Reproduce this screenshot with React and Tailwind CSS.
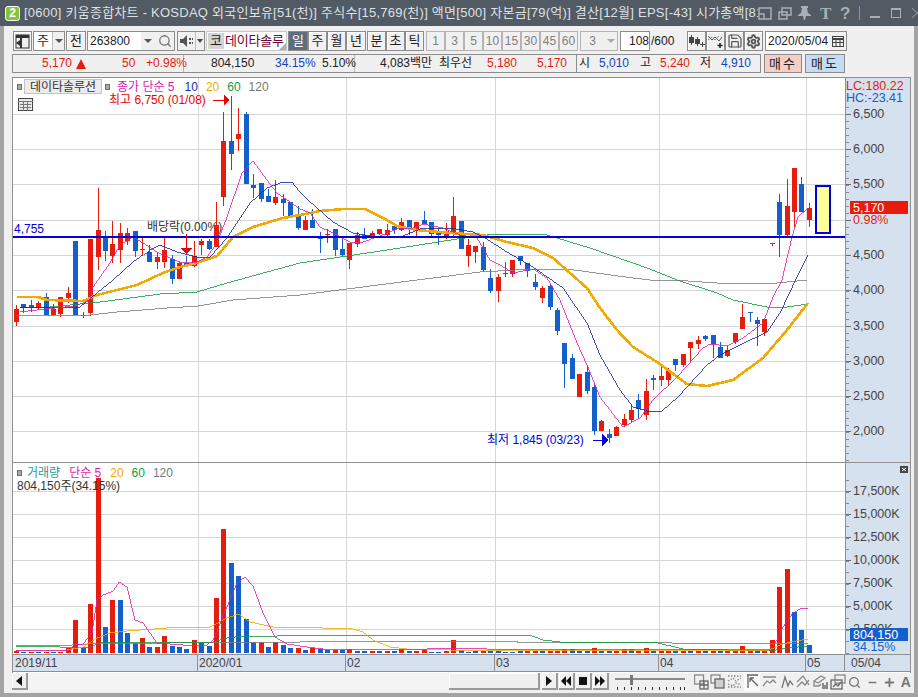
import React from 'react';
import { Search, Settings, Save, Minus, Plus } from 'lucide-react';

const RED = '#e81c0c';
const BLUE = '#1360cc';

// candle data in page pixels: [bodyTop, bodyBottom, high, low, 'r' | 'b']
const candles = [
  [309, 322, 305, 326, 'r'], [304, 308, 304, 313, 'b'], [305, 307, 300, 312, 'b'], [303, 308, 301, 310, 'r'],
  [297, 315, 293, 315, 'b'], [309, 315, 304, 315, 'r'], [297, 314, 297, 317, 'r'], [293, 298, 287, 303, 'r'],
  [241, 315, 241, 315, 'b'], [315, 316, 312, 318, 'r'], [239, 313, 239, 316, 'r'], [230, 257, 188, 270, 'r'],
  [237, 251, 231, 261, 'b'], [244, 256, 221, 263, 'r'], [233, 250, 223, 263, 'r'], [233, 241, 228, 245, 'r'],
  [231, 251, 231, 257, 'b'], [249, 250, 236, 255, 'r'], [252, 262, 245, 262, 'b'], [257, 262, 252, 269, 'r'],
  [250, 262, 238, 268, 'r'], [259, 279, 255, 284, 'b'], [263, 279, 261, 279, 'r'], [263, 266, 256, 267, 'b'],
  [256, 266, 241, 267, 'r'], [241, 245, 239, 255, 'r'], [241, 249, 239, 250, 'b'], [225, 247, 202, 247, 'r'],
  [141, 197, 112, 206, 'r'], [141, 154, 96, 170, 'b'], [134, 139, 108, 151, 'r'], [114, 184, 112, 184, 'b'],
  [185, 188, 174, 198, 'b'], [183, 199, 183, 202, 'b'], [196, 202, 189, 202, 'b'], [197, 203, 180, 205, 'r'],
  [199, 203, 194, 216, 'b'], [202, 216, 202, 218, 'b'], [216, 228, 206, 230, 'b'], [220, 230, 216, 230, 'r'],
  [220, 228, 209, 228, 'b'], [238, 239, 232, 253, 'b'], [234, 235, 229, 243, 'r'], [229, 250, 229, 256, 'b'],
  [249, 255, 238, 257, 'b'], [243, 260, 243, 269, 'r'], [235, 244, 232, 247, 'r'], [235, 239, 228, 239, 'b'],
  [233, 236, 231, 238, 'r'], [229, 234, 229, 235, 'r'], [230, 235, 224, 236, 'r'], [226, 230, 225, 234, 'b'],
  [222, 230, 218, 231, 'r'], [220, 229, 220, 235, 'b'], [222, 229, 222, 236, 'r'], [220, 224, 211, 224, 'b'],
  [222, 234, 222, 236, 'b'], [233, 235, 228, 245, 'b'], [231, 236, 223, 239, 'r'], [216, 232, 197, 236, 'r'],
  [221, 249, 221, 249, 'b'], [245, 256, 239, 267, 'r'], [246, 252, 246, 263, 'r'], [247, 270, 242, 272, 'b'],
  [278, 291, 269, 293, 'b'], [277, 291, 274, 302, 'r'], [273, 274, 262, 277, 'r'], [260, 274, 260, 277, 'r'],
  [256, 261, 256, 265, 'b'], [263, 271, 263, 277, 'b'], [282, 287, 274, 290, 'b'], [288, 298, 286, 303, 'r'],
  [286, 307, 284, 310, 'b'], [310, 331, 308, 335, 'b'], [343, 364, 343, 388, 'b'], [358, 379, 354, 379, 'b'],
  [374, 397, 374, 397, 'r'], [372, 391, 366, 394, 'b'], [387, 431, 383, 435, 'b'], [421, 431, 420, 431, 'r'],
  [434, 438, 429, 443, 'b'], [427, 436, 426, 436, 'r'], [419, 425, 414, 427, 'r'], [410, 420, 405, 423, 'r'],
  [400, 409, 394, 418, 'b'], [391, 415, 379, 420, 'r'], [378, 380, 375, 390, 'b'], [376, 380, 364, 386, 'r'],
  [371, 380, 368, 386, 'r'], [359, 365, 359, 371, 'b'], [354, 365, 354, 367, 'r'], [342, 348, 342, 361, 'r'],
  [340, 344, 336, 349, 'r'], [336, 339, 335, 341, 'b'], [335, 344, 335, 358, 'b'], [347, 358, 342, 358, 'b'],
  [350, 356, 346, 357, 'r'], [333, 342, 333, 344, 'r'], [317, 329, 304, 329, 'r'], [312, 313, 312, 322, 'b'],
  [320, 324, 317, 346, 'b'], [319, 332, 319, 336, 'r'], [243, 244, 243, 246, 'r'], [202, 235, 194, 257, 'b'],
  [206, 235, 179, 236, 'r'], [168, 212, 168, 227, 'r'], [184, 212, 177, 212, 'b'], [208, 220, 203, 227, 'r'],
];

// volume bar tops, negative = blue
const vols = [
  651, -652, 652, -652, 652, -652, 652, 648, 620, -648, 604, 478, -627, 600, -600, -633, -643, 638, -647, 647,
  636, -646, -647, -649, 640, -643, -646, 598, 529, -563, -576, -619, -642, 642, -647, 642, -645, -648, 648, -650,
  648, -649, -650, 650, -650, 649, -651, -651, 651, -651, 651, -651, 649, -651, 651, 650, -652, -652, 651, 640,
  -650, -652, -651, 651, -651, -651, -652, -652, -651, 651, 651, -651, 651, 651, 649, -649, -651, -651, 648, -651,
  -651, 651, 649, -649, 651, 648, -651, 651, 651, -651, 651, -651, 651, -651, 651, -651, 651, 651, 646, 651,
  -651, 651, 640, 587, 569, -612, -630, -645,
];

const ma5 = '20,312 45,309 75,306 90,300 93,287 110,263 120,245 133,237 143,243 157,252 170,258 182,263 197,262 207,257 217,243 227,217 242,173 253,161 267,180 277,193 300,209 310,213 320,227 333,233 350,242 360,243 377,237 400,228 413,228 423,224 443,228 460,235 477,238 490,260 500,265 513,273 533,269 547,278 560,300 577,343 587,365 600,397 623,427 640,418 653,400 677,377 703,348 710,344 727,346 743,338 763,323 773,297 782,280 792,237 798,217 808,208';
const ma10 = '20,308 50,307 80,307 97,293 113,280 133,262 150,250 160,245 177,252 197,257 210,257 227,238 250,203 267,188 283,182 292,182 300,192 308,200 333,222 353,233 377,237 400,237 423,228 450,228 473,232 485,238 507,252 533,267 563,288 587,323 600,355 620,390 633,407 647,411 662,411 678,397 707,365 720,355 740,345 767,332 780,313 797,277 808,255';
const ma20 = '17,297 38,297 47,300 83,301 97,295 113,291 137,285 163,273 180,267 197,263 217,256 233,237 253,227 283,218 300,215 320,211 343,209 365,209 383,218 397,226 417,230 450,233 483,235 507,242 533,248 553,258 587,288 600,308 617,330 633,347 657,362 687,384 707,386 733,380 763,358 787,330 808,303';
const ma60 = '20,308 50,307 100,302 160,294 197,292 227,283 267,272 300,263 347,256 400,248 457,239 487,235 517,234 547,235 590,248 650,269 677,280 717,293 733,300 767,307 787,307 808,304';
const ma120 = '16,316 90,315 117,312 167,308 198,306 233,300 300,295 347,289 417,280 480,272 533,269 567,269 633,278 650,280 673,280 717,283 777,283 807,280';

const vma5 = '16,650 70,650 75,644 83,644 92,633 97,600 103,595 113,591 119,582 127,587 135,620 143,623 157,643 170,644 183,645 207,645 213,640 227,607 237,583 245,577 253,586 263,613 275,637 287,644 307,647 323,649 353,650 427,649 450,648 487,649 753,649 770,649 777,640 783,627 793,613 802,608 808,609';
const vma20 = '16,650 67,650 83,647 97,638 110,633 127,631 167,628 210,627 227,618 238,614 250,622 273,627 323,628 353,629 363,632 373,640 390,647 407,649 450,650 590,650 767,651 780,645 790,642 808,639';
const vma60 = '16,646 57,646 60,647 87,648 100,643 123,642 213,642 227,638 243,636 277,636 280,635 457,635 532,636 543,640 560,642 658,643 683,649 770,651 787,648 808,646';
const vma120 = '16,645 72,645 87,644 160,643 193,642 300,642 517,641 517,642 672,643 808,643';

const priceTicks = [[6500, 114], [6000, 149], [5500, 184], [5000, 220], [4500, 255], [4000, 290], [3500, 326], [3000, 361], [2500, 396], [2000, 431]];
const volTicks = [['17,500K', 491], ['15,000K', 514], ['12,500K', 537], ['10,000K', 560], ['7,500K', 583], ['5,000K', 606], ['2,500K', 629]];
const vLines = [198, 346, 495, 659, 806];

const cx = (i) => 16 + i * 7.41;

function Btn({ className = '', children }) {
  return (
    <div className={`h-[20px] shrink-0 flex items-center justify-center border border-[#8c8c8c] bg-[#f0f0f0] shadow-[inset_1px_1px_0_#fff] text-[13px] text-[#222] ${className}`}>
      {children}
    </div>
  );
}

function Num({ children }) {
  return (
    <div className="w-[19px] h-[20px] shrink-0 flex items-center justify-center border border-[#b4b4b4] bg-[#f0f0f0] text-[12px] text-[#808080]">
      {children}
    </div>
  );
}

function Square() {
  return <div className="w-[5px] h-[6px] bg-[#a8a8a8] border border-[#707070]" />;
}

function PriceChart() {
  return (
    <svg className="block w-[832px] h-[384px]" viewBox="13 78 832 384" shapeRendering="crispEdges">
      {priceTicks.map(([p, y]) => <line key={p} x1="13" x2="845" y1={y + 0.5} y2={y + 0.5} stroke="#d6d6d6" />)}
      {vLines.map((x) => <line key={x} x1={x + 0.5} x2={x + 0.5} y1="78" y2="462" stroke="#d6d6d6" />)}
      <text x="147" y="231" fontSize="12" fill="#333">배당락(0.00%)</text>
      {candles.map(([t, b, h, l, c], i) => {
        const x = Math.round(cx(i));
        const col = c === 'r' ? RED : BLUE;
        return (
          <g key={i}>
            <rect x={x} y={h} width="1" height={l - h} fill={col} />
            <rect x={x - 2} y={t} width="5" height={Math.max(b - t, 1)} fill={col} />
          </g>
        );
      })}
      <polyline points={ma120} fill="none" stroke="#7c7c7c" strokeWidth="0.800" />
      <polyline points={ma60} fill="none" stroke="#0f9a3c" strokeWidth="0.800" />
      <polyline points={ma20} fill="none" stroke="#f0aa00" strokeWidth="2.600" />
      <polyline points={ma10} fill="none" stroke="#10209c" strokeWidth="0.800" />
      <polyline points={ma5} fill="none" stroke="#e01cb0" strokeWidth="0.800" />
      <rect x="13" y="236" width="832" height="2" fill="#0000e0" />
      <text x="14" y="233" fontSize="12" fill="#0000e0">4,755</text>
      <text x="109" y="104" fontSize="12" fill="#f00000">최고 6,750 (01/08)</text>
      <path d="M213 100h11" stroke="#f00000" strokeWidth="1" />
      <path d="M224 95l5 5-5 5z" fill="#f00000" />
      <text x="487" y="444" fontSize="12" fill="#0000e0">최저 1,845 (03/23)</text>
      <path d="M593 440h9" stroke="#0000e0" />
      <path d="M602 434l6 6-6 6z" fill="#0000e0" />
      <path d="M186 234v14" stroke="#f00000" />
      <path d="M181 248h11l-5.500 6z" fill="#f00000" />
      <rect x="816" y="186" width="14" height="47" fill="#ffff99" stroke="#0000e0" strokeWidth="2" />
    </svg>
  );
}

function VolumeChart() {
  return (
    <svg className="block w-[832px] h-[191px]" viewBox="13 463 832 191" shapeRendering="crispEdges">
      {volTicks.map(([n, y]) => <line key={n} x1="13" x2="845" y1={y + 0.5} y2={y + 0.5} stroke="#d6d6d6" />)}
      {vLines.map((x) => <line key={x} x1={x + 0.5} x2={x + 0.5} y1="463" y2="654" stroke="#d6d6d6" />)}
      {vols.map((v, i) => {
        const top = Math.abs(v);
        return <rect key={i} x={Math.round(cx(i)) - 2} y={top} width="5" height={653 - top} fill={v < 0 ? BLUE : RED} />;
      })}
      <polyline points={vma120} fill="none" stroke="#7c7c7c" strokeWidth="0.800" />
      <polyline points={vma60} fill="none" stroke="#0f9a3c" strokeWidth="0.800" />
      <polyline points={vma20} fill="none" stroke="#f0aa00" strokeWidth="0.800" />
      <polyline points={vma5} fill="none" stroke="#e01cb0" strokeWidth="0.800" />
    </svg>
  );
}

function PriceAxis() {
  const minor = [];
  for (let y = 107; y < 462; y += 7.07) minor.push(Math.round(y));
  return (
    <svg className="block w-[65px] h-[384px]" viewBox="846 78 65 384">
      <g shapeRendering="crispEdges">
        {minor.map((y, i) => <line key={i} x1="846" x2="849" y1={y + 0.5} y2={y + 0.5} stroke="#8a8a8a" />)}
        {priceTicks.map(([p, y]) => <line key={p} x1="846" x2="851" y1={y + 0.5} y2={y + 0.5} stroke="#6e6e6e" />)}
      </g>
      {priceTicks.filter(([p]) => p !== 5000).map(([p, y]) => (
        <text key={p} x="853" y={y + 4} fontSize="12.500" fill="#444">{p.toLocaleString('en-US')}</text>
      ))}
      <text x="846" y="90" fontSize="12.500" fill={RED}>LC:180.22</text>
      <text x="846" y="102" fontSize="12.500" fill={BLUE}>HC:-23.41</text>
      <rect x="850" y="201" width="58" height="13" fill={RED} shapeRendering="crispEdges" />
      <text x="853" y="212" fontSize="12.500" fill="#fff">5,170</text>
      <text x="853" y="224" fontSize="12.500" fill={RED}>0.98%</text>
    </svg>
  );
}

function VolumeAxis() {
  const minor = [];
  for (let y = 480; y < 654; y += 11.5) minor.push(Math.round(y));
  return (
    <svg className="block w-[65px] h-[191px]" viewBox="846 463 65 191">
      <g shapeRendering="crispEdges">
        {minor.map((y, i) => <line key={i} x1="846" x2="849" y1={y + 0.5} y2={y + 0.5} stroke="#8a8a8a" />)}
        {volTicks.map(([n, y]) => <line key={n} x1="846" x2="851" y1={y + 0.5} y2={y + 0.5} stroke="#6e6e6e" />)}
        <rect x="900" y="466" width="8" height="7" fill="#444" />
      </g>
      <path d="M902 468l4 3M906 468l-4 3" stroke="#fff" />
      {volTicks.map(([n, y]) => (
        <text key={n} x="853" y={y + 4} fontSize="12.500" fill="#444">{n}</text>
      ))}
      <rect x="850" y="628" width="58" height="13" fill={BLUE} shapeRendering="crispEdges" />
      <text x="853" y="639" fontSize="12.500" fill="#fff">804,150</text>
      <text x="853" y="651" fontSize="12.500" fill={BLUE}>34.15%</text>
    </svg>
  );
}

function WindowIcons() {
  return (
    <div className="flex-1 flex items-center justify-end gap-[6px] h-full pr-[7px] text-[#a9afb6]">
      <svg className="w-[14px] h-[13px]" viewBox="0 0 14 13" fill="none" stroke="currentColor" strokeWidth="1.500"><rect x="1" y="1" width="12" height="11" /><path d="M1 7h5v5" /></svg>
      <svg className="w-[14px] h-[13px]" viewBox="0 0 14 13" fill="none" stroke="currentColor" strokeWidth="1.500"><rect x="4" y="1" width="9" height="7" /><rect x="1" y="5" width="8" height="7" /></svg>
      <svg className="w-[13px] h-[14px]" viewBox="0 0 13 14" fill="currentColor"><path d="M3 0h7v2H9l1 5 3 2v1H8l-1 4h-1l-1-4H0V9l3-2 1-5H3z" /></svg>
      <span className="ml-[3px] w-[12px] text-[17px] font-bold font-['Liberation_Serif',serif] leading-none">T</span>
      <span className="ml-[2px] w-[12px] text-[17px] font-bold leading-none">?</span>
      <div className="ml-[1px] w-px h-[14px] bg-[#8d939a]" />
      <div className="ml-[4px] w-[10px] h-[2px] mt-[8px] bg-current" />
      <div className="ml-[5px] w-[10px] h-[10px] border border-current border-t-2" />
      <svg className="ml-[5px] w-[10px] h-[10px]" viewBox="0 0 10 10" stroke="#8b9097" strokeWidth="1.200"><path d="M0 0l10 10M10 0L0 10" /></svg>
    </div>
  );
}

function Toolbar() {
  return (
    <div className="flex items-center h-[20px] shrink-0 pl-px">
      <Btn className="w-[19px]">
        <svg className="w-[15px] h-[15px]" viewBox="0 0 15 15"><rect x="1" y="1" width="13" height="13" fill="none" stroke="#333" /><rect x="1" y="1" width="13" height="3" fill="#333" /><rect x="5" y="4" width="2" height="10" fill="#333" /><path d="M5 6L1 9l4 3z" fill="#333" /></svg>
      </Btn>
      <div className="ml-px w-[32px] h-[20px] flex border border-[#8c8c8c] bg-white text-[13px] text-[#222]">
        <div className="w-[18px] flex items-center justify-center">주</div>
        <div className="flex-1 bg-[#f0f0f0] border-l border-[#c0c0c0] flex items-center justify-center">
          <div className="w-0 h-0 border-x-[4px] border-x-transparent border-t-[4px] border-t-[#555]" />
        </div>
      </div>
      <Btn className="ml-px w-[20px]">전</Btn>
      <div className="ml-px w-[88px] h-[20px] flex items-center border border-[#8c8c8c] bg-white text-[12px] text-[#222]">
        <div className="w-[53px] pl-[2px]">263800</div>
        <div className="w-[14px] h-full bg-[#f0f0f0] flex items-center justify-center">
          <div className="w-0 h-0 border-x-[4px] border-x-transparent border-t-[4px] border-t-[#555]" />
        </div>
        <div className="flex-1 h-full bg-[#f0f0f0] flex items-center justify-center">
          <Search className="w-[14px] h-[14px] text-[#777]" strokeWidth={2.2} />
        </div>
      </div>
      <div className="ml-[2px] w-[28px] h-[20px] flex border border-[#8c8c8c] bg-[#f0f0f0]">
        <div className="w-[17px] flex items-center justify-center">
          <svg className="w-[14px] h-[12px]" viewBox="0 0 14 12" fill="#555"><path d="M0 4h3l4-4v12L3 8H0z" /><rect x="9" y="3" width="2" height="2" /><rect x="9" y="7" width="2" height="2" /><rect x="12" y="3" width="1" height="2" /><rect x="12" y="7" width="1" height="2" /></svg>
        </div>
        <div className="flex-1 border-l border-[#c0c0c0] flex items-center justify-center">
          <div className="w-0 h-0 border-x-[3px] border-x-transparent border-t-[4px] border-t-[#444]" />
        </div>
      </div>
      <div className="ml-px w-[81px] h-[20px] relative flex items-center border border-[#c8c8c8] bg-white text-[13px]">
        <div className="w-[16px] h-[16px] ml-px bg-[#d4d4d4] flex items-center justify-center text-[#222]">코</div>
        <div className="ml-px whitespace-nowrap overflow-hidden text-[#6b0a38] tracking-[-0.2px]">데이타솔루</div>
        <div className="absolute right-0 bottom-0 w-0 h-0 border-l-[7px] border-l-transparent border-b-[7px] border-b-[#b0b0b0]" />
      </div>
      <div className="ml-px flex">
        <Btn className="w-[20px] !bg-[#5f6d7d] !text-white !shadow-none">일</Btn>
        <Btn className="w-[19px]">주</Btn>
        <Btn className="w-[19px]">월</Btn>
        <Btn className="w-[20px]">년</Btn>
      </div>
      <div className="ml-px flex">
        <Btn className="w-[19px]">분</Btn>
        <Btn className="w-[19px]">초</Btn>
        <Btn className="w-[19px]">틱</Btn>
      </div>
      <div className="ml-[2px] flex">
        {['1', '3', '5', '10', '15', '30', '45', '60'].map((n) => <Num key={n}>{n}</Num>)}
      </div>
      <div className="ml-[2px] w-[38px] h-[20px] flex items-center border border-[#b4b4b4] bg-[#f0f0f0] text-[12px] text-[#808080]">
        <div className="w-[23px] text-center">3</div>
        <div className="flex-1 flex justify-center">
          <div className="w-0 h-0 border-x-[4px] border-x-transparent border-t-[4px] border-t-[#aaa]" />
        </div>
      </div>
      <div className="ml-[2px] w-[30px] h-[20px] border border-[#8c8c8c] bg-white text-[12px] text-[#222] text-right leading-[18px]">108</div>
      <div className="ml-px w-[35px] text-[12px] text-[#222]">/600</div>
      <div className="ml-px flex">
        <Btn className="w-[19px]">
          <svg className="w-[17px] h-[16px]" viewBox="0 0 17 16" fill="#444"><path d="M3 2h1v2h2v6H4v2H3v-2H1V4h2zM9 4h1v2h2v5h-2v2H9v-2H7V6h2z" /><path d="M12 11h2V9h1v2h2v1h-2v2h-1v-2h-2z" /></svg>
        </Btn>
        <Btn className="w-[19px]">
          <svg className="w-[17px] h-[16px]" viewBox="0 0 17 16" fill="none" stroke="#555"><path d="M1 3l4 4 3-3 4 4 3-4" /><path d="M1 7l4-3 3 3 4-4" strokeDasharray="1 1" /><path d="M13 10v5M10.500 12.500h5" stroke="#222" strokeWidth="1.500" /></svg>
        </Btn>
        <Btn className="w-[19px]"><Save className="w-[16px] h-[16px] text-[#555]" strokeWidth={1.8} /></Btn>
        <Btn className="w-[19px]"><Settings className="w-[15px] h-[15px] text-[#555]" strokeWidth={3} /></Btn>
      </div>
      <div className="ml-[2px] w-[82px] h-[20px] flex items-center border border-[#8c8c8c] bg-white text-[12px] text-[#222]">
        <div className="w-[63px] pl-[2px]">2020/05/04</div>
        <div className="flex-1 h-full bg-[#f0f0f0] flex items-center justify-center">
          <svg className="w-[12px] h-[11px]" viewBox="0 0 12 11" fill="none" stroke="#444"><rect x="0.500" y="0.500" width="11" height="10" /><path d="M0 3h12" strokeWidth="2" /><path d="M4 3v8M8 3v8M0 6.500h12" /></svg>
        </div>
      </div>
    </div>
  );
}

function InfoRow() {
  return (
    <div className="mt-[3px] h-[19px] shrink-0 flex text-[12px] leading-[17px]">
      <div className="w-[749px] flex border border-[#8c8c8c] bg-[#f0f0f0] text-[#222]">
        <div className="w-[171px] flex border-r border-[#b8b8b8] text-[#e81c0c]">
          <span className="ml-[29px] w-[30px]">5,170</span>
          <div className="ml-[4px] mt-[4px] w-0 h-0 border-x-[5px] border-x-transparent border-b-[10px] border-b-[#e81c0c]" />
          <span className="ml-[36px] w-[12px]">50</span>
          <span className="ml-[12px]">+0.98%</span>
        </div>
        <div className="w-[171px] flex border-r border-[#b8b8b8]">
          <span className="ml-[27px] w-[42px]">804,150</span>
          <span className="ml-[22px] w-[36px] text-[#1046c0]">34.15%</span>
          <span className="ml-[11px]">5.10%</span>
        </div>
        <div className="w-[222px] flex border-r border-[#8c8c8c]">
          <span className="ml-[25px] w-[54px] whitespace-nowrap">4,083백만</span>
          <span className="ml-[5px] w-[36px] whitespace-nowrap">최우선</span>
          <span className="ml-[12px] w-[30px] text-[#e81c0c]">5,180</span>
          <span className="ml-[20px] w-[30px] text-[#e81c0c]">5,170</span>
        </div>
        <div className="flex-1 flex">
          <span className="ml-[2px] w-[12px]">시</span>
          <span className="ml-[8px] w-[30px] text-[#1046c0]">5,010</span>
          <span className="ml-[11px] w-[12px]">고</span>
          <span className="ml-[8px] w-[30px] text-[#e81c0c]">5,240</span>
          <span className="ml-[10px] w-[12px]">저</span>
          <span className="ml-[9px] w-[30px] text-[#1046c0]">4,910</span>
        </div>
      </div>
      <div className="ml-[3px] w-[38px] flex items-center justify-center border border-[#8c8c8c] bg-[#f4cfc8] text-[13px] tracking-[2px] text-[#222]">매수</div>
      <div className="ml-[3px] w-[40px] flex items-center justify-center border border-[#8c8c8c] bg-[#c4dcf4] text-[13px] tracking-[2px] text-[#222]">매도</div>
    </div>
  );
}

function Ctl({ children }) {
  return (
    <div className="w-[16px] h-[17px] flex items-center justify-center bg-[#f0f0f0] border-r-2 border-b-2 border-[#9a9a9a] shadow-[inset_1px_1px_0_#fff]">{children}</div>
  );
}

function BottomBar() {
  return (
    <div className="h-[18px] shrink-0 flex items-start">
      <Ctl>
        <div className="w-0 h-0 border-y-[5px] border-y-transparent border-r-[6px] border-r-[#111]" />
      </Ctl>
      <div className="w-[422px] h-[17px] bg-[#f4f4f4] bg-[radial-gradient(#dcdcdc_0.5px,transparent_0.5px)] bg-[length:2px_2px]" />
      <div className="w-[91px] h-[17px] bg-[#f0f0f0] border-r-2 border-b-2 border-[#9a9a9a] shadow-[inset_1px_1px_0_#fff]" />
      <div className="ml-[2px] flex gap-px">
        <Ctl><div className="w-0 h-0 border-y-[5px] border-y-transparent border-l-[6px] border-l-[#111]" /></Ctl>
        <Ctl>
          <div className="flex">
            <div className="w-0 h-0 border-y-[5px] border-y-transparent border-r-[5px] border-r-[#111]" />
            <div className="w-0 h-0 border-y-[5px] border-y-transparent border-r-[5px] border-r-[#111]" />
          </div>
        </Ctl>
        <Ctl><div className="w-[8px] h-[8px] bg-[#111]" /></Ctl>
        <Ctl>
          <div className="flex">
            <div className="w-0 h-0 border-y-[5px] border-y-transparent border-l-[5px] border-l-[#111]" />
            <div className="w-0 h-0 border-y-[5px] border-y-transparent border-l-[5px] border-l-[#111]" />
          </div>
        </Ctl>
      </div>
      <svg className="ml-[6px] w-[72px] h-[18px]" viewBox="0 0 72 18" shapeRendering="crispEdges">
        <rect x="0" y="5" width="70" height="2" fill="#8a8a8a" />
        <rect x="15" y="2" width="3" height="10" fill="#777" />
        {[2, 9, 16, 23, 30, 37, 44, 51, 58, 65, 69].map((x) => <rect key={x} x={x} y="14" width="1" height="3" fill="#333" />)}
      </svg>
      <svg className="ml-[7px] w-[152px] h-[18px] shrink-0" viewBox="0 0 152 18" fill="none" stroke="#888" strokeWidth="1.300">
        <rect x="0.500" y="2" width="9" height="9" />
        <rect x="6" y="8" width="8" height="8" stroke="#666" />
        <path d="M6 12h8M10 8v8" stroke="#666" />
        <rect x="17" y="2" width="9" height="8" />
        <rect x="21" y="6" width="9" height="9" fill="#d0d0d0" stroke="#666" />
        <path d="M34 3h13M34 14h13M34 8l5-3 3 3 5-3M34 11l5 2 3-3 5 2" strokeDasharray="1.500 1.500" />
        <rect x="50" y="0" width="16" height="18" fill="#fafafa" stroke="none" />
        <path d="M53 2h11M54 2v13M56 5l8 8M56 5h4M56 5v4" stroke="#666" />
        <path d="M69 13l4-5 3 2 3-3 3 3M69 4h13" />
        <path d="M88 15l3-11 3 9 2-5 3 4" stroke="#777" />
        <path d="M103 14l5-5 3 3 4-5M103 9l6-6 6 9" />
        <path d="M120 8l7-5 4 2-7 5zM120 8v5h5l2-2" />
        <path d="M129 10v6M131 12v4M133 9v7" stroke="#555" />
        <rect x="137" y="7" width="11" height="9" stroke="#666" />
        <rect x="141" y="2" width="10" height="8" />
        <path d="M139 14l3-3 2 2 3-4" stroke="#666" />
      </svg>
      <div className="ml-[2px] flex items-center gap-[5px] h-[18px] text-[#777]">
        <Search className="w-[13px] h-[13px]" strokeWidth={2.5} />
        <Minus className="ml-[1px] w-[11px] h-[11px]" strokeWidth={3.5} />
        <Plus className="w-[13px] h-[13px]" strokeWidth={3.5} />
        <span className="text-[14px] font-bold leading-none">A</span>
      </div>
    </div>
  );
}

export default function App() {
  return (
    <div className="w-[918px] h-[697px] flex flex-col overflow-hidden bg-[#a3a3a3] font-['Liberation_Sans','Noto_Sans_CJK_KR',sans-serif]">
      {/* title bar */}
      <div className="h-[26px] shrink-0 flex items-center bg-[#525a64]">
        <div className="ml-[5px] w-[15px] h-[15px] shrink-0 rounded-[3px] border border-white bg-[#86c440] flex items-center justify-center text-[12px] font-bold text-white">2</div>
        <div className="ml-[4px] w-[734px] shrink-0 overflow-hidden whitespace-nowrap text-[13px] tracking-[0.25px] text-[#dde1e5]">
          [0600] 키움종합차트 - KOSDAQ 외국인보유[51(천)] 주식수[15,769(천)] 액면[500] 자본금[79(억)] 결산[12월] EPS[-43] 시가총액[81
        </div>
        <WindowIcons />
      </div>

      {/* window body */}
      <div className="flex-1 min-h-0 mx-[4px] mb-[4px] pl-[8px] pr-[3px] pt-[5px] flex flex-col bg-[#f0f0f0]">
        <Toolbar />
        <InfoRow />

        <div className="mt-[4px] w-[899px] h-[596px] shrink-0 flex flex-col border border-[#909090] border-b-0 bg-white">
          <div className="h-[384px] flex">
            <div className="relative w-[832px]">
              <PriceChart />
              <div className="absolute left-[4px] top-[1px] flex items-center text-[12px] leading-[14px]">
                <Square />
                <div className="ml-[2px] w-[78px] h-[15px] flex items-center justify-center bg-[#ececec] border border-[#c4c4c4] text-[#333]">데이타솔루션</div>
                <div className="ml-[3px]"><Square /></div>
                <span className="ml-[7px] text-[#d81cb0] whitespace-nowrap">종가 단순 5</span>
                <span className="ml-[10px] text-[#1030b0]">10</span>
                <span className="ml-[8px] text-[#f0aa00]">20</span>
                <span className="ml-[8px] text-[#0f9a3c]">60</span>
                <span className="ml-[8px] text-[#777]">120</span>
              </div>
              <svg className="absolute left-[5px] top-[20px] w-[15px] h-[13px]" viewBox="0 0 15 13" fill="none" stroke="#444" shapeRendering="crispEdges">
                <rect x="0.500" y="0.500" width="14" height="12" fill="#e8e8e8" />
                <path d="M0 3.500h15M5.500 3v10M9.500 3v10M2 6.500h11M2 9.500h11" stroke="#777" />
              </svg>
            </div>
            <div className="w-[65px] border-l border-[#909090] bg-[#d6e1ef]"><PriceAxis /></div>
          </div>

          <div className="h-[192px] flex border-t border-[#909090]">
            <div className="relative w-[832px]">
              <VolumeChart />
              <div className="absolute left-[4px] top-[3px] text-[12px] leading-[14px]">
                <div className="flex items-center">
                  <Square />
                  <span className="ml-[5px] text-[#1f9a9c]">거래량</span>
                  <span className="ml-[9px] text-[#d81cb0]">단순 5</span>
                  <span className="ml-[9px] text-[#f0aa00]">20</span>
                  <span className="ml-[8px] text-[#0f9a3c]">60</span>
                  <span className="ml-[8px] text-[#777]">120</span>
                </div>
                <div className="mt-[-1px] text-[#333] whitespace-nowrap">804,150주(34.15%)</div>
              </div>
            </div>
            <div className="w-[65px] border-l border-[#909090] bg-[#d6e1ef]"><VolumeAxis /></div>
          </div>

          <div className="h-[18px] flex border-y border-[#909090] bg-[#d6e1ef] text-[12px] leading-[16px] text-[#444]">
            <div className="w-[185px] pl-[2px] border-r border-[#909090]">2019/11</div>
            <div className="w-[148px] pl-[1px] border-r border-[#909090]">2020/01</div>
            <div className="w-[149px] pl-[1px] border-r border-[#909090]">02</div>
            <div className="w-[164px] pl-[1px] border-r border-[#909090]">03</div>
            <div className="w-[147px] pl-[1px] border-r border-[#909090]">04</div>
            <div className="w-[39px] pl-[1px] border-r border-[#909090]">05</div>
            <div className="pl-[6px]">05/04</div>
          </div>
        </div>

        <BottomBar />
      </div>
    </div>
  );
}
